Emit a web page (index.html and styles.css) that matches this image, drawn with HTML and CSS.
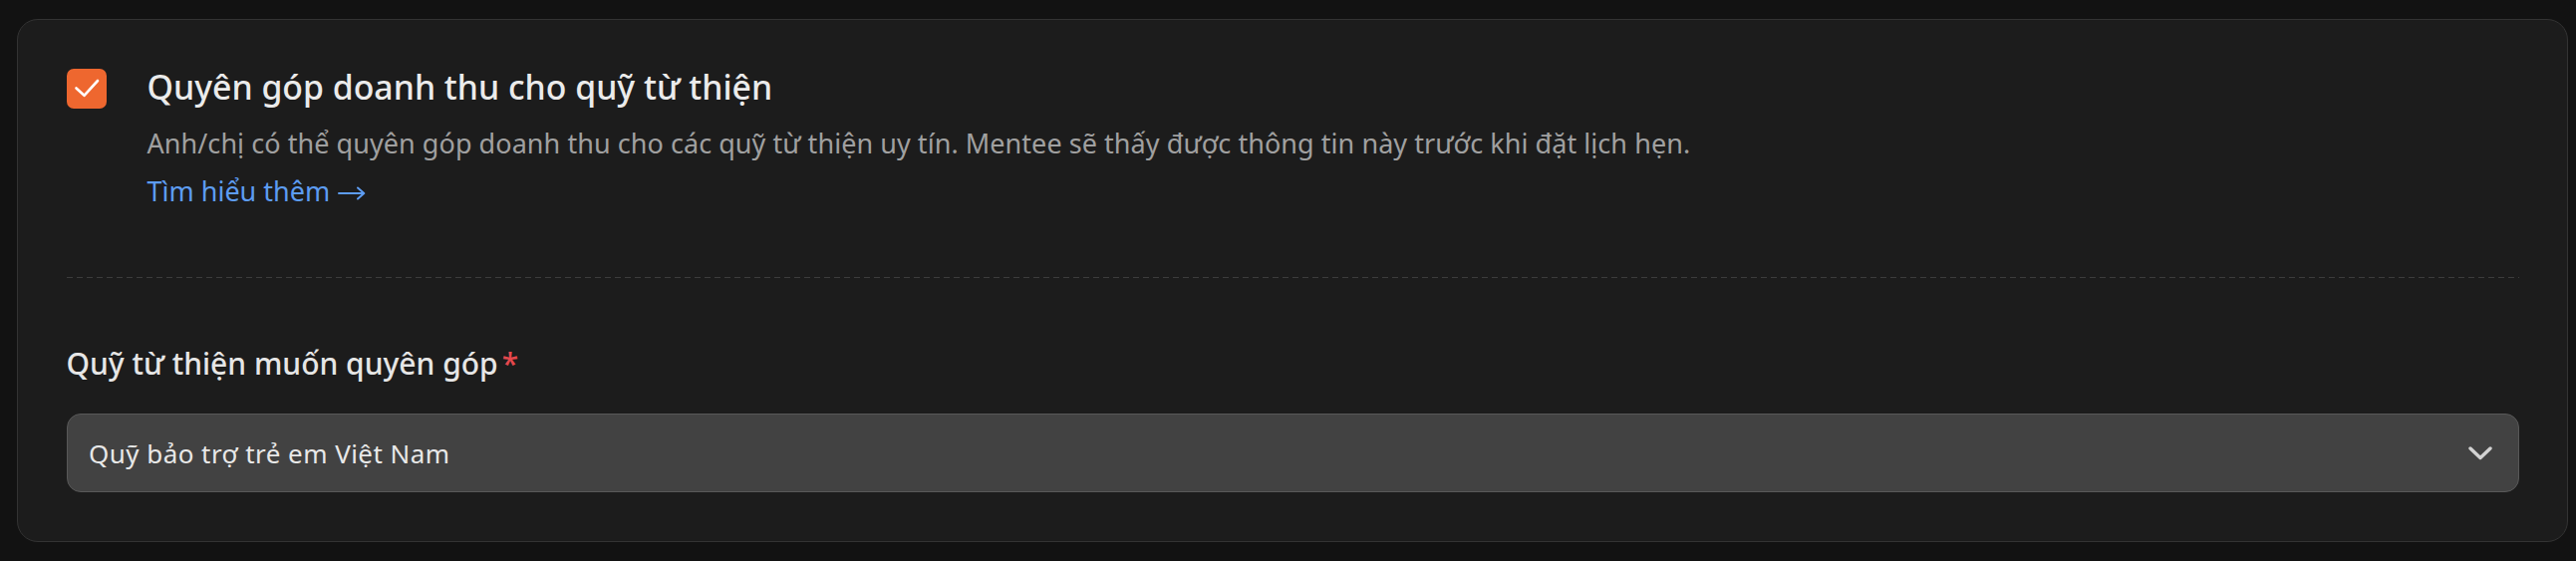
FILE: index.html
```html
<!DOCTYPE html>
<html lang="vi">
<head>
<meta charset="utf-8">
<title>Quyên góp</title>
<link rel="stylesheet" href="styles.css">
</head>
<body>
<section class="card">
  <div class="header">
    <span class="checkbox" role="checkbox" aria-checked="true">
      <svg width="40" height="40" viewBox="0 0 40 40"><path d="M9.5 19.5 L17.5 26.8 L31 12" fill="none" stroke="#fff" stroke-width="2.6" stroke-linecap="round" stroke-linejoin="round"/></svg>
    </span>
    <div class="header-text">
      <h2 class="title">Quyên góp doanh thu cho quỹ từ thiện</h2>
      <p class="desc">Anh/chị có thể quyên góp doanh thu cho các quỹ từ thiện uy tín. Mentee sẽ thấy được thông tin này trước khi đặt lịch hẹn.</p>
      <a class="link" href="#">Tìm hiểu thêm <svg class="arrow" width="28" height="14" viewBox="0 0 28 14" aria-label="→"><path d="M1 7 H26 M20 1.5 L26.3 7 L20 12.5" fill="none" stroke="#5d9cf2" stroke-width="2" stroke-linecap="round" stroke-linejoin="round"/></svg></a>
    </div>
  </div>
  <div class="divider"></div>
  <label class="label">Quỹ từ thiện muốn quyên góp<span class="req">*</span></label>
  <div class="select">
    <span class="select-value">Quỹ bảo trợ trẻ em Việt Nam</span>
    <svg class="chev" width="24" height="14" viewBox="0 0 24 14"><path d="M2 2 L12 11.5 L22 2" fill="none" stroke="#d2d2d2" stroke-width="3.4" stroke-linecap="round" stroke-linejoin="round"/></svg>
  </div>
</section>
</body>
</html>
```
FILE: styles.css
```css
html, body {
  margin: 0;
  padding: 0;
  background: #121212;
}
body {
  padding: 19px 8px 19px 17px;
  font-family: "Noto Sans", "Open Sans", sans-serif;
}
.card {
  background: #1c1c1c;
  border: 1.5px solid #333333;
  border-radius: 21px;
  padding: 48.5px 48.5px 48.5px 48.5px;
  height: 525px;
  box-sizing: border-box;
}
.header {
  display: flex;
  gap: 41px;
  align-items: flex-start;
}
.checkbox {
  flex: none;
  width: 40px;
  height: 40px;
  border-radius: 7px;
  background: #ee672f;
  display: flex;
}
.header-text {
  display: flex;
  flex-direction: column;
  align-items: flex-start;
}
.title {
  margin: 0;
  font-size: 33.8px;
  line-height: 36px;
  font-weight: 500;
  color: #ebebeb;
}
.desc {
  margin: 15px 0 0;
  font-size: 27px;
  letter-spacing: 0.05px;
  line-height: 48px;
  color: #a0a0a0;
}
.link {
  font-size: 27px;
  line-height: 48px;
  color: #5d9cf2;
  text-decoration: none;
  display: flex;
  align-items: center;
  gap: 8px;
}
.arrow {
  flex: none;
  margin-top: 4px;
}
.divider {
  margin-top: 62px;
  height: 1.5px;
  background: repeating-linear-gradient(to right, #3c3c3c 0 6px, transparent 6px 10px);
}
.label {
  display: block;
  margin-top: 66px;
  font-size: 30px;
  line-height: 40px;
  font-weight: 500;
  color: #e6e6e6;
}
.req {
  color: #e5484d;
  margin-left: 4px;
}
.select {
  margin-top: 30px;
  height: 79px;
  box-sizing: border-box;
  background: #424242;
  border: 1.5px solid #585858;
  border-radius: 14px;
  display: flex;
  align-items: center;
  justify-content: space-between;
  padding: 0 26px 0 21.5px;
}
.select-value {
  font-size: 26px;
  letter-spacing: 0.45px;
  color: #e8e8e8;
}
.chev {
  flex: none;
}
```
